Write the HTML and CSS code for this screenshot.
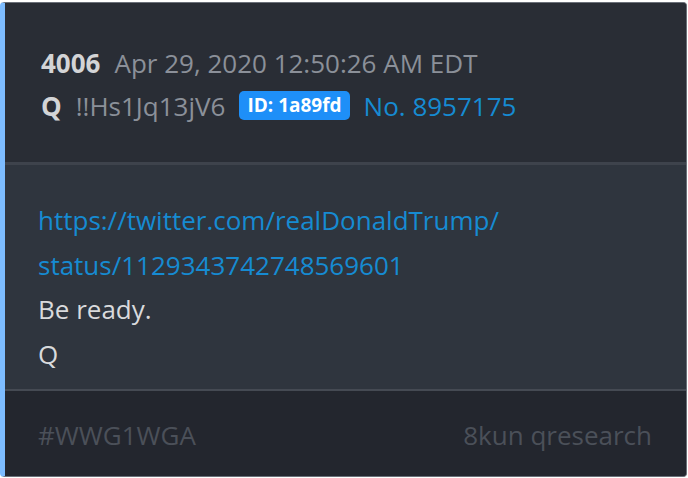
FILE: index.html
```html
<!DOCTYPE html>
<html lang="en">
<head>
    <meta charset="UTF-8">
    <meta name="viewport" content="width=device-width, initial-scale=1.0">
    <title>Post 4006</title>
    <link rel="stylesheet" href="styles.css">
</head>
<body>
    <div class="post">
        <div class="post-header">
            <div class="meta-row">
                <span class="post-num">4006</span>
                <span class="post-date">Apr 29, 2020 12:50:26 AM EDT</span>
            </div>
            <div class="meta-row">
                <span class="author">Q</span>
                <span class="trip">!!Hs1Jq13jV6</span>
                <span class="badge">ID: 1a89fd</span>
                <a class="ref" href="#">No. 8957175</a>
            </div>
        </div>

        <div class="post-body">
            <a class="link" href="#">https://twitter.com/realDonaldTrump/<br>status/1129343742748569601</a>
            <p>Be ready.</p>
            <p>Q</p>
        </div>

        <div class="post-footer">
            <span>#WWG1WGA</span>
            <span>8kun qresearch</span>
        </div>
    </div>
</body>
</html>
```

FILE: styles.css
```css
* {
    margin: 0;
    padding: 0;
    box-sizing: border-box;
}

body {
    font-family: 'Open Sans', 'Noto Sans', sans-serif;
    background: #ffffff;
    width: 688px;
    height: 478px;
    padding: 2px 1px 1px 0;
}

.post {
    height: 475px;
    display: flex;
    flex-direction: column;
    border: 1px solid #6b7079;
    border-left: 5px solid #7dbcff;
    border-radius: 4px;
    background: #2f353e;
    overflow: hidden;
}

.post-header {
    background: #292d35;
    padding: 38px 0 0 36px;
    height: 162px;
    flex-shrink: 0;
    border-bottom: 3px solid #3e434c;
}

.meta-row {
    display: flex;
    align-items: center;
    height: 43px;
    font-size: 26px;
}

.post-num, .author {
    color: #d3d4d6;
    font-weight: 700;
    margin-right: 14px;
}

.post-date, .trip {
    color: #8b9099;
}

.trip {
    margin-right: 14px;
}

.badge {
    background: #1e8ff8;
    color: #fff;
    font-weight: 700;
    font-size: 19px;
    line-height: 23px;
    padding: 3px 8px;
    border-radius: 5px;
    margin-right: 14px;
}

.ref, .link {
    color: #168bd2;
    text-decoration: none;
}

.post-body {
    flex: 1;
    padding: 33px 0 0 33px;
    font-size: 26px;
    line-height: 44.5px;
    color: #d9dadc;
    border-bottom: 2px solid #454a53;
}

.link {
    display: block;
}

.post-footer {
    height: 85px;
    flex-shrink: 0;
    background: #23262e;
    display: flex;
    justify-content: space-between;
    align-items: center;
    padding: 2px 34px 0 33px;
    font-size: 26px;
    color: #4b5059;
}
```
